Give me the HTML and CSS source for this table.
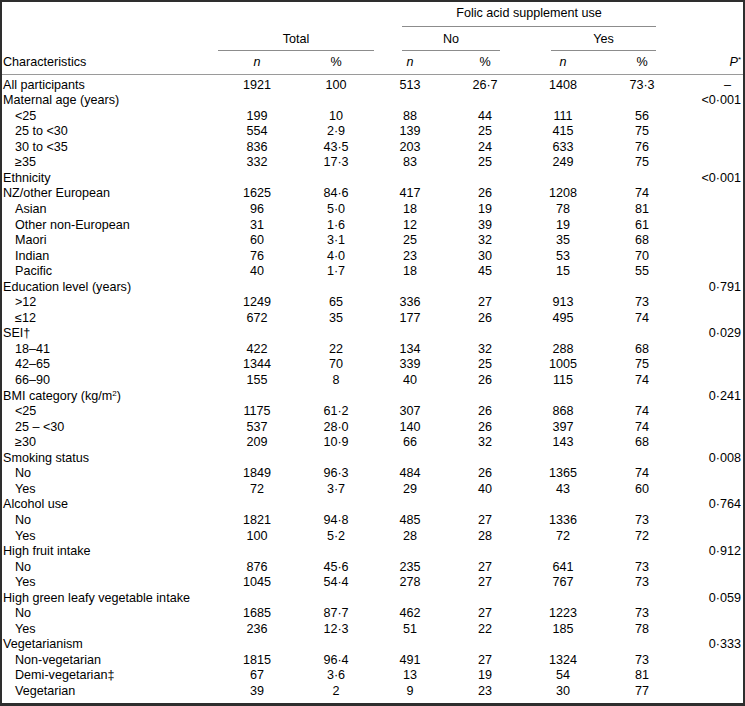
FILE: index.html
```html
<!DOCTYPE html>
<html lang="en">
<head>
<meta charset="utf-8">
<title>Folic acid supplement use by characteristics</title>
<link rel="stylesheet" href="styles.css">
</head>
<body>
<div class="frame">
<table class="tbl">
<colgroup>
<col class="w0"><col class="w1"><col class="w2"><col class="w3"><col class="w4"><col class="w5"><col class="w6"><col class="w7">
</colgroup>
<thead>
<tr class="r1">
<th colspan="3"></th>
<th colspan="4"><div class="gl gl-folic">Folic acid supplement use</div></th>
<th></th>
</tr>
<tr class="r2">
<th></th>
<th colspan="2"><div class="gl gl-total">Total</div></th>
<th colspan="2"><div class="gl gl-no">No</div></th>
<th colspan="2"><div class="gl gl-yes">Yes</div></th>
<th></th>
</tr>
<tr class="r3">
<th class="lab">Characteristics</th>
<th><i>n</i></th><th>%</th>
<th><i>n</i></th><th>%</th>
<th><i>n</i></th><th>%</th>
<th class="p"><i>P</i><sup>*</sup></th>
</tr>
</thead>
<tbody>
<tr class="first"><td class="lab">All participants</td><td>1921</td><td>100</td><td>513</td><td>26·7</td><td>1408</td><td>73·3</td><td class="p dash">–</td></tr>
<tr><td class="lab">Maternal age (years)</td><td></td><td></td><td></td><td></td><td></td><td></td><td class="p">&lt;0·001</td></tr>
<tr><td class="lab sub">&lt;25</td><td>199</td><td>10</td><td>88</td><td>44</td><td>111</td><td>56</td><td class="p"></td></tr>
<tr><td class="lab sub">25 to &lt;30</td><td>554</td><td>2·9</td><td>139</td><td>25</td><td>415</td><td>75</td><td class="p"></td></tr>
<tr><td class="lab sub">30 to &lt;35</td><td>836</td><td>43·5</td><td>203</td><td>24</td><td>633</td><td>76</td><td class="p"></td></tr>
<tr><td class="lab sub">≥35</td><td>332</td><td>17·3</td><td>83</td><td>25</td><td>249</td><td>75</td><td class="p"></td></tr>
<tr><td class="lab">Ethnicity</td><td></td><td></td><td></td><td></td><td></td><td></td><td class="p">&lt;0·001</td></tr>
<tr><td class="lab">NZ/other European</td><td>1625</td><td>84·6</td><td>417</td><td>26</td><td>1208</td><td>74</td><td class="p"></td></tr>
<tr><td class="lab sub">Asian</td><td>96</td><td>5·0</td><td>18</td><td>19</td><td>78</td><td>81</td><td class="p"></td></tr>
<tr><td class="lab sub">Other non-European</td><td>31</td><td>1·6</td><td>12</td><td>39</td><td>19</td><td>61</td><td class="p"></td></tr>
<tr><td class="lab sub">Maori</td><td>60</td><td>3·1</td><td>25</td><td>32</td><td>35</td><td>68</td><td class="p"></td></tr>
<tr><td class="lab sub">Indian</td><td>76</td><td>4·0</td><td>23</td><td>30</td><td>53</td><td>70</td><td class="p"></td></tr>
<tr><td class="lab sub">Pacific</td><td>40</td><td>1·7</td><td>18</td><td>45</td><td>15</td><td>55</td><td class="p"></td></tr>
<tr><td class="lab">Education level (years)</td><td></td><td></td><td></td><td></td><td></td><td></td><td class="p">0·791</td></tr>
<tr><td class="lab sub">&gt;12</td><td>1249</td><td>65</td><td>336</td><td>27</td><td>913</td><td>73</td><td class="p"></td></tr>
<tr><td class="lab sub">≤12</td><td>672</td><td>35</td><td>177</td><td>26</td><td>495</td><td>74</td><td class="p"></td></tr>
<tr><td class="lab">SEI†</td><td></td><td></td><td></td><td></td><td></td><td></td><td class="p">0·029</td></tr>
<tr><td class="lab sub">18–41</td><td>422</td><td>22</td><td>134</td><td>32</td><td>288</td><td>68</td><td class="p"></td></tr>
<tr><td class="lab sub">42–65</td><td>1344</td><td>70</td><td>339</td><td>25</td><td>1005</td><td>75</td><td class="p"></td></tr>
<tr><td class="lab sub">66–90</td><td>155</td><td>8</td><td>40</td><td>26</td><td>115</td><td>74</td><td class="p"></td></tr>
<tr><td class="lab">BMI category (kg/m<sup>2</sup>)</td><td></td><td></td><td></td><td></td><td></td><td></td><td class="p">0·241</td></tr>
<tr><td class="lab sub">&lt;25</td><td>1175</td><td>61·2</td><td>307</td><td>26</td><td>868</td><td>74</td><td class="p"></td></tr>
<tr><td class="lab sub">25 – &lt;30</td><td>537</td><td>28·0</td><td>140</td><td>26</td><td>397</td><td>74</td><td class="p"></td></tr>
<tr><td class="lab sub">≥30</td><td>209</td><td>10·9</td><td>66</td><td>32</td><td>143</td><td>68</td><td class="p"></td></tr>
<tr><td class="lab">Smoking status</td><td></td><td></td><td></td><td></td><td></td><td></td><td class="p">0·008</td></tr>
<tr><td class="lab sub">No</td><td>1849</td><td>96·3</td><td>484</td><td>26</td><td>1365</td><td>74</td><td class="p"></td></tr>
<tr><td class="lab sub">Yes</td><td>72</td><td>3·7</td><td>29</td><td>40</td><td>43</td><td>60</td><td class="p"></td></tr>
<tr><td class="lab">Alcohol use</td><td></td><td></td><td></td><td></td><td></td><td></td><td class="p">0·764</td></tr>
<tr><td class="lab sub">No</td><td>1821</td><td>94·8</td><td>485</td><td>27</td><td>1336</td><td>73</td><td class="p"></td></tr>
<tr><td class="lab sub">Yes</td><td>100</td><td>5·2</td><td>28</td><td>28</td><td>72</td><td>72</td><td class="p"></td></tr>
<tr><td class="lab">High fruit intake</td><td></td><td></td><td></td><td></td><td></td><td></td><td class="p">0·912</td></tr>
<tr><td class="lab sub">No</td><td>876</td><td>45·6</td><td>235</td><td>27</td><td>641</td><td>73</td><td class="p"></td></tr>
<tr><td class="lab sub">Yes</td><td>1045</td><td>54·4</td><td>278</td><td>27</td><td>767</td><td>73</td><td class="p"></td></tr>
<tr><td class="lab">High green leafy vegetable intake</td><td></td><td></td><td></td><td></td><td></td><td></td><td class="p">0·059</td></tr>
<tr><td class="lab sub">No</td><td>1685</td><td>87·7</td><td>462</td><td>27</td><td>1223</td><td>73</td><td class="p"></td></tr>
<tr><td class="lab sub">Yes</td><td>236</td><td>12·3</td><td>51</td><td>22</td><td>185</td><td>78</td><td class="p"></td></tr>
<tr><td class="lab">Vegetarianism</td><td></td><td></td><td></td><td></td><td></td><td></td><td class="p">0·333</td></tr>
<tr><td class="lab sub">Non-vegetarian</td><td>1815</td><td>96·4</td><td>491</td><td>27</td><td>1324</td><td>73</td><td class="p"></td></tr>
<tr><td class="lab sub">Demi-vegetarian‡</td><td>67</td><td>3·6</td><td>13</td><td>19</td><td>54</td><td>81</td><td class="p"></td></tr>
<tr><td class="lab sub">Vegetarian</td><td>39</td><td>2</td><td>9</td><td>23</td><td>30</td><td>77</td><td class="p"></td></tr>
</tbody>
</table>
</div>
</body>
</html>
```

FILE: styles.css
```css
html, body {
  margin: 0;
  padding: 0;
  background: #fff;
}

body {
  font-family: "Liberation Sans", Arial, Helvetica, sans-serif;
  font-size: 12.6px;
  color: #000;
}

.frame {
  width: 745px;
  height: 706px;
  box-sizing: border-box;
  border-top: 2px solid #2e2e2e;
  border-bottom: 3px solid #2e2e2e;
  border-left: 2px solid #2e2e2e;
  border-right: 2px solid #2e2e2e;
}

.tbl {
  width: 741px;
  border-collapse: collapse;
  table-layout: fixed;
}

.w0 { width: 216px; }
.w1 { width: 78px; }
.w2 { width: 80px; }
.w3 { width: 68px; }
.w4 { width: 82px; }
.w5 { width: 74px; }
.w6 { width: 84px; }
.w7 { width: 59px; }

.tbl th,
.tbl td {
  padding: 0;
  line-height: 15.54px;
  font-weight: normal;
  white-space: nowrap;
  text-align: center;
  vertical-align: bottom;
}

.tbl i {
  font-style: italic;
}

.tbl sup {
  font-size: 8px;
  line-height: 0;
  vertical-align: 4px;
}

.r1 th {
  padding-top: 4px;
}

.r2 th {
  padding-top: 5px;
}

.gl {
  border-bottom: 1px solid #8c8c8c;
  text-align: center;
}

.r1 .gl {
  padding-bottom: 4px;
}

.r2 .gl {
  padding-bottom: 3px;
}

.gl-folic { margin: 0 28px 0 26px; }
.gl-total { margin: 0 2px 0 0; }
.gl-no { margin: 0 26px 0 26px; }
.gl-yes { margin: 0 28px 0 25px; }

.r3 th {
  padding-top: 4px;
  padding-bottom: 3px;
  border-bottom: 1px solid #9a9a9a;
}

.first td {
  padding-top: 3px;
}

.tbl .lab {
  text-align: left;
  padding-left: 1px;
}

.tbl .sub {
  padding-left: 13px;
}

.tbl .p {
  text-align: right;
  padding-right: 2px;
}

.tbl .dash {
  padding-right: 12px;
}
```
